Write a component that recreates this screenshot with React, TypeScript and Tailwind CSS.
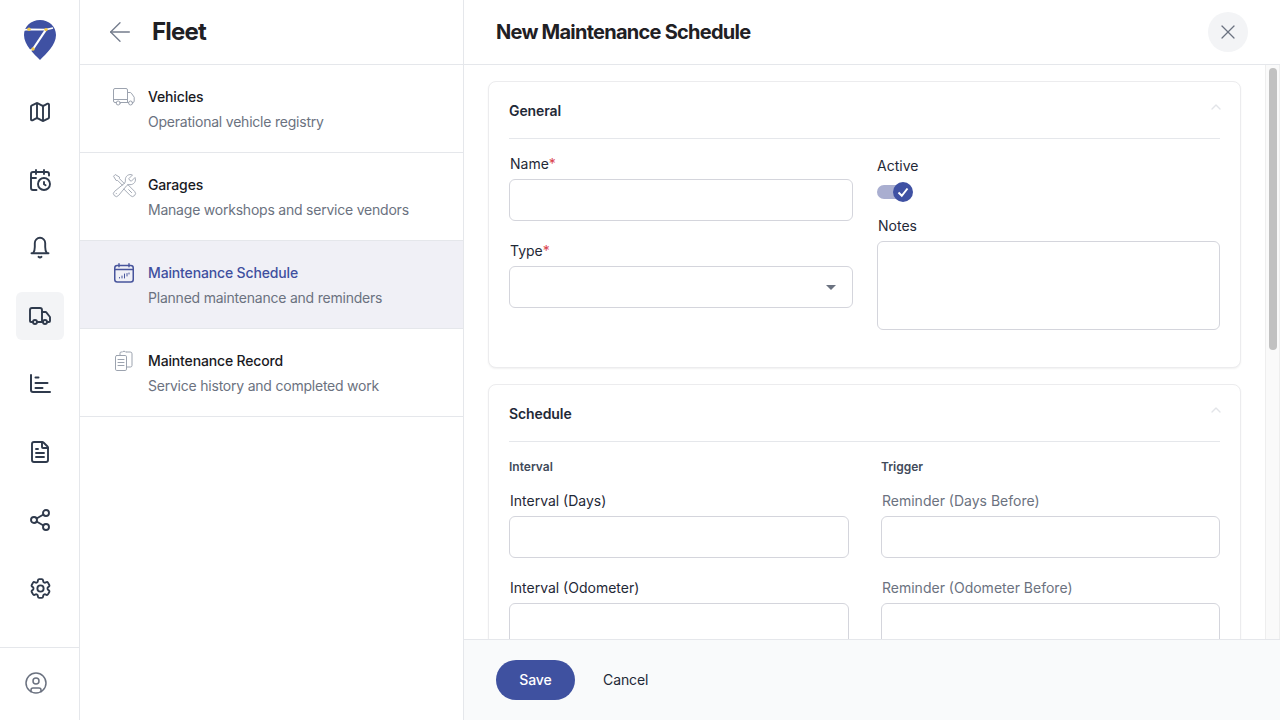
import React from 'react';
import {
  ArrowLeft,
  CalendarClock,
  ChevronUp,
  CircleUser,
  FileText,
  Map as MapIcon,
  Share2,
  Truck,
  X,
} from 'lucide-react';
import { HiOutlineCog6Tooth, HiOutlineWrenchScrewdriver } from 'react-icons/hi2';

const Logo = () => (
  <svg width="32" height="40" viewBox="0 0 32 40">
    <path d="M16 0C25 0 32 6.5 32 15C32 25 22 34 16 40C10 34 0 25 0 15C0 6.5 7 0 16 0Z" fill="#3f51a3" />
    <path d="M0 10L5 9.3L22 9.6L29 8M3 32L9 29" fill="none" stroke="#fff" strokeWidth="1.7" />
    <path d="M22 9.6L9 29" fill="none" stroke="#fff" strokeWidth="2.2" />
    <circle cx="5" cy="9.3" r="1.7" fill="#f2c94c" />
    <circle cx="22" cy="9.6" r="1.7" fill="#f2c94c" />
    <circle cx="9" cy="29" r="1.7" fill="#f2c94c" />
  </svg>
);

const BellIcon = () => (
  <svg width="24" height="24" viewBox="0 0 24 24" fill="none" stroke="currentColor" strokeWidth="1.9" strokeLinecap="round" strokeLinejoin="round">
    <path d="M3.5 17.2h17" />
    <path d="M5.2 17c1.2-1.5 1.6-3 1.6-6V7a5.2 5.2 0 0 1 10.4 0v4c0 3 .4 4.5 1.6 6" />
    <path d="M10.5 20.8c.8.7 2.2.7 3 0" />
  </svg>
);

const ChartIcon = () => (
  <svg width="24" height="24" viewBox="0 0 24 24" fill="none" stroke="currentColor" strokeWidth="2" strokeLinecap="round" strokeLinejoin="round">
    <path d="M3 3v15a2 2 0 0 0 2 2h17" />
    <path d="M7.5 5.5h3M7.5 11h12M7.5 16h7" />
  </svg>
);

const LightTruck = () => (
  <svg width="22" height="18" viewBox="0 0 22 18" fill="none" stroke="currentColor" strokeWidth="1" strokeLinecap="round" strokeLinejoin="round">
    <path d="M3.2 14.5H2a1.5 1.5 0 0 1-1.5-1.5V2A1.5 1.5 0 0 1 2 .5h11A1.5 1.5 0 0 1 14.5 2v12.5H7.2" />
    <path d="M14.5 4.5h2.6a1.5 1.5 0 0 1 1.2.6l2.9 4.1v3.9a1.4 1.4 0 0 1-1.4 1.4h-.6M15.6 14.5h-1.1" />
    <path d="M.5 11.5h14" />
    <circle cx="5.2" cy="15" r="2" />
    <circle cx="17.6" cy="15" r="2" />
  </svg>
);

const CalendarBars = () => (
  <svg width="20" height="20" viewBox="0 0 20 20" fill="none" stroke="currentColor" strokeLinecap="round">
    <rect x="0.75" y="2.5" width="18.5" height="16.5" rx="2.5" strokeWidth="1.5" />
    <path d="M5 .75v3M15 .75v3M1 6.5h18" strokeWidth="1.4" />
    <path d="M5.5 14.5v.5M8 13v2M10.5 11v4M13 10.5v2.5M15 10v1" strokeWidth="1" />
  </svg>
);

const ClipboardStack = () => (
  <svg width="18" height="22" viewBox="0 0 18 22" fill="none" stroke="currentColor" strokeWidth="1" strokeLinecap="round" strokeLinejoin="round">
    <path d="M1.8 5.5h8.4a1.3 1.3 0 0 1 1.3 1.3v12.4a1.3 1.3 0 0 1-1.3 1.3H1.8a1.3 1.3 0 0 1-1.3-1.3V6.8a1.3 1.3 0 0 1 1.3-1.3Z" />
    <path d="M5 5.5V3.2a1.2 1.2 0 0 1 1.2-1.2h1.3c.3-1 2.7-1 3 0h1.1M12 2h3.2a1.8 1.8 0 0 1 1.8 1.8v11.6a1.6 1.6 0 0 1-1.6 1.6h-3.9" />
    <path d="M3 9.5h6M3 12.5h6M3 15.5h6" />
  </svg>
);

const railIcons = [
  <MapIcon key="map" size={24} strokeWidth={1.9} />,
  <CalendarClock key="cal" size={24} strokeWidth={1.9} />,
  <BellIcon key="bell" />,
  <Truck key="truck" size={24} strokeWidth={1.9} />,
  <ChartIcon key="chart" />,
  <FileText key="file" size={24} strokeWidth={1.9} />,
  <Share2 key="share" size={24} strokeWidth={1.9} />,
  <HiOutlineCog6Tooth key="cog" size={25} strokeWidth={1.8} />,
];

const menuItems = [
  { title: 'Vehicles', desc: 'Operational vehicle registry', icon: <LightTruck /> },
  { title: 'Garages', desc: 'Manage workshops and service vendors', icon: <HiOutlineWrenchScrewdriver size={27} strokeWidth={0.8} className="shrink-0" /> },
  { title: 'Maintenance Schedule', desc: 'Planned maintenance and reminders', icon: <CalendarBars />, active: true },
  { title: 'Maintenance Record', desc: 'Service history and completed work', icon: <ClipboardStack /> },
];

const inputClass = 'block h-[42px] w-full rounded-md border border-[#d4d5dc] bg-white outline-none';

const Label = ({ children, muted }: { children: React.ReactNode; muted?: boolean }) => (
  <label className={`ml-px block h-5 text-sm leading-5 font-normal ${muted ? 'text-[#6b7280]' : 'text-[#1f2937]'}`}>
    {children}
  </label>
);

const Required = () => <span className="text-[#d9434e]">*</span>;

const CardHeader = ({ title }: { title: string }) => (
  <div className="flex h-[57px] justify-between border-b border-[#e5e7eb] pt-[19px]">
    <span className="text-sm leading-5 font-semibold tracking-[-0.1px] text-[#1f2937]">{title}</span>
    <ChevronUp size={16} className="-mt-[2px] -mr-[4px] text-[#e2e4e8]" />
  </div>
);

const Card = ({ children, className }: { children: React.ReactNode; className?: string }) => (
  <section className={`shrink-0 rounded-lg border border-[#ececee] bg-white px-5 shadow-[0_1px_2px_rgba(0,0,0,0.06)] ${className ?? ''}`}>
    {children}
  </section>
);

export default function App() {
  return (
    <div className="flex h-[720px] w-[1280px] overflow-hidden bg-white font-['Inter',sans-serif]">
      {/* Icon rail */}
      <aside className="flex w-20 shrink-0 flex-col border-r border-[#e5e7eb]">
        <div className="flex justify-center pt-5 pl-px">
          <Logo />
        </div>
        <nav className="mt-7 flex flex-1 flex-col items-center gap-5 pl-px">
          {railIcons.map((icon, i) => (
            <div
              key={i}
              className={`flex h-12 w-12 items-center justify-center rounded-md text-[#2f3a4c] ${i === 3 ? 'bg-[#f3f4f6]' : ''}`}
            >
              {icon}
            </div>
          ))}
        </nav>
        <div className="flex h-[73px] items-center border-t border-[#e5e7eb] pb-[2px] pl-6 text-[#6b7280]">
          <CircleUser size={24} strokeWidth={1.5} />
        </div>
      </aside>

      {/* Section menu */}
      <div className="w-[384px] shrink-0 border-r border-[#e5e7eb]">
        <div className="flex h-[65px] items-center border-b border-[#e5e7eb] pl-[24px]">
          <ArrowLeft size={32} strokeWidth={1} className="text-[#747c8c]" />
          <h1 className="ml-4 text-2xl font-bold tracking-[-0.8px] text-[#1f2024]">Fleet</h1>
        </div>
        {menuItems.map((item) => (
          <div
            key={item.title}
            className={`flex h-[88px] border-b border-[#e5e7eb] pt-[22px] ${item.active ? 'bg-[#f0f0f6]' : ''}`}
          >
            <div className="w-[68px] shrink-0 pl-8">
              <div className={`flex h-5 w-6 items-center justify-center ${item.active ? 'text-[#47549c]' : 'text-[#9ca3af]'}`}>
                {item.icon}
              </div>
            </div>
            <div>
              <div className={`text-sm leading-5 font-[450] tracking-[-0.15px] ${item.active ? 'text-[#3f4f9f]' : 'text-[#1a1a1f]'}`}>
                {item.title}
              </div>
              <div className="mt-[5px] text-sm leading-5 tracking-[-0.22px] text-[#6b7280]">{item.desc}</div>
            </div>
          </div>
        ))}
      </div>

      {/* Form panel */}
      <main className="flex min-w-0 flex-1 flex-col">
        <header className="flex h-[65px] shrink-0 items-center justify-between border-b border-[#e5e7eb] pr-[32px] pl-[32px]">
          <h2 className="text-xl font-bold tracking-[-0.75px] text-[#1f2024]">New Maintenance Schedule</h2>
          <button className="flex h-10 w-10 items-center justify-center rounded-full bg-[#f3f4f6] text-[#6b7280]">
            <X size={24} strokeWidth={1.2} />
          </button>
        </header>

        <div className="flex min-h-0 flex-1">
          <div className="flex min-w-0 flex-1 flex-col gap-4 overflow-hidden px-6 pt-4">
            <Card className="h-[287px]">
              <CardHeader title="General" />
              <div className="grid grid-cols-[344px_343px] gap-x-6 pt-[15px]">
                <div>
                  <Label>
                    Name<Required />
                  </Label>
                  <input className={`${inputClass} mt-[5px]`} />
                  <div className="mt-5">
                    <Label>
                      Type<Required />
                    </Label>
                    <div className={`${inputClass} mt-[5px] flex items-center justify-end pr-4`}>
                      <svg width="10" height="5" viewBox="0 0 10 5">
                        <path d="M0 0h10L5 5Z" fill="#6b7280" />
                      </svg>
                    </div>
                  </div>
                </div>
                <div className="pt-[2px]">
                  <div className="h-5 text-sm leading-5 font-normal text-[#1f2937]">Active</div>
                  <div className="relative mt-[6px] h-[21px] w-9 pt-[3px]">
                    <div className="h-[14px] w-7 rounded-full bg-[#a9aed0]" />
                    <div className="absolute top-0 right-0 flex h-5 w-5 items-center justify-center rounded-full bg-[#3f51a3]">
                      <svg width="14" height="14" viewBox="0 0 14 14" fill="none" stroke="#fff" strokeWidth="2">
                        <path d="M2.5 7.5L5.8 10.8L11.5 3.5" />
                      </svg>
                    </div>
                  </div>
                  <div className="mt-[13px]">
                    <Label>Notes</Label>
                    <textarea className="mt-[5px] block h-[89px] w-full resize-none rounded-md border border-[#d4d5dc] bg-white outline-none" />
                  </div>
                </div>
              </div>
            </Card>

            <Card>
              <CardHeader title="Schedule" />
              <div className="grid grid-cols-[340px_339px] gap-x-8 pt-[17px]">
                <div>
                  <div className="text-xs leading-4 font-semibold text-[#414a5a]">Interval</div>
                  <div className="mt-4">
                    <Label>Interval (Days)</Label>
                    <input className={`${inputClass} mt-[5px]`} />
                  </div>
                  <div className="mt-5">
                    <Label>Interval (Odometer)</Label>
                    <input className={`${inputClass} mt-[5px]`} />
                  </div>
                </div>
                <div>
                  <div className="text-xs leading-4 font-semibold text-[#414a5a]">Trigger</div>
                  <div className="mt-4">
                    <Label muted>Reminder (Days Before)</Label>
                    <input className={`${inputClass} mt-[5px]`} />
                  </div>
                  <div className="mt-5">
                    <Label muted>Reminder (Odometer Before)</Label>
                    <input className={`${inputClass} mt-[5px]`} />
                  </div>
                </div>
              </div>
            </Card>
          </div>

          {/* Scrollbar */}
          <div className="w-[15px] shrink-0 border-x border-[#eeeeee] bg-[#fafafa] pt-[3px] pl-[3px]">
            <div className="h-[282px] w-2 rounded-full bg-[#c1c1c1]" />
          </div>
        </div>

        <footer className="flex h-[81px] shrink-0 items-center border-t border-[#e5e7eb] bg-[#f9fafb] pl-8">
          <button className="h-10 w-[79px] rounded-full bg-[#3f51a0] text-sm font-[450] tracking-[-0.1px] text-white">Save</button>
          <button className="ml-7 text-sm tracking-[-0.1px] text-[#1f2937]">Cancel</button>
        </footer>
      </main>
    </div>
  );
}
